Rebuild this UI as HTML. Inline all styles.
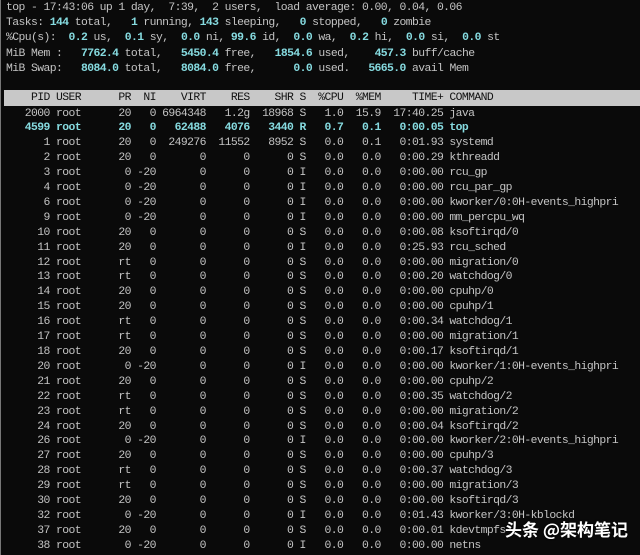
<!DOCTYPE html>
<html><head><meta charset="utf-8"><style>
html,body{margin:0;padding:0;background:#0a0a0a;}
body{width:640px;height:555px;overflow:hidden;position:relative;border-left:1px solid #777;box-sizing:border-box;}
.t{position:absolute;left:5px;font-family:"Liberation Mono",monospace;font-size:11.4px;letter-spacing:-0.59px;color:#c4c4c4;white-space:pre;}
#h{top:1px;line-height:15.2px;}
#p{top:106.5px;line-height:14.9px;}
.c{color:#86dbe0;font-weight:bold;}
#bar{position:absolute;left:3px;right:0;top:90px;height:16px;background:#c8c8c8;}
#bt{position:absolute;left:5px;top:90px;line-height:16px;font-family:"Liberation Mono",monospace;font-size:11.4px;letter-spacing:-0.59px;color:#111;white-space:pre;}
#wm{position:absolute;left:504px;top:516px;font-family:"Noto Sans CJK SC",sans-serif;font-size:17px;color:#fff;font-weight:bold;text-shadow:0 0 2px #000;}
</style></head><body>
<div class="t" id="h">top - 17:43:06 up 1 day,  7:39,  2 users,  load average: 0.00, 0.04, 0.06
Tasks: <span class="c">144</span> total,   <span class="c">1</span> running, <span class="c">143</span> sleeping,   <span class="c">0</span> stopped,   <span class="c">0</span> zombie
%Cpu(s):  <span class="c">0.2</span> us,  <span class="c">0.1</span> sy,  <span class="c">0.0</span> ni, <span class="c">99.6</span> id,  <span class="c">0.0</span> wa,  <span class="c">0.2</span> hi,  <span class="c">0.0</span> si,  <span class="c">0.0</span> st
MiB Mem :   <span class="c">7762.4</span> total,   <span class="c">5450.4</span> free,   <span class="c">1854.6</span> used,    <span class="c">457.3</span> buff/cache
MiB Swap:   <span class="c">8084.0</span> total,   <span class="c">8084.0</span> free,      <span class="c">0.0</span> used.   <span class="c">5665.0</span> avail Mem</div>
<div id="bar"></div>
<div id="bt">    PID USER      PR  NI    VIRT    RES    SHR S  %CPU  %MEM     TIME+ COMMAND</div>
<div class="t" id="p">   2000 root      20   0 6964348   1.2g  18968 S   1.0  15.9  17:40.25 java
<span class="c">   4599 root      20   0   62488   4076   3440 R   0.7   0.1   0:00.05 top</span>
      1 root      20   0  249276  11552   8952 S   0.0   0.1   0:01.93 systemd
      2 root      20   0       0      0      0 S   0.0   0.0   0:00.29 kthreadd
      3 root       0 -20       0      0      0 I   0.0   0.0   0:00.00 rcu_gp
      4 root       0 -20       0      0      0 I   0.0   0.0   0:00.00 rcu_par_gp
      6 root       0 -20       0      0      0 I   0.0   0.0   0:00.00 kworker/0:0H-events_highpri
      9 root       0 -20       0      0      0 I   0.0   0.0   0:00.00 mm_percpu_wq
     10 root      20   0       0      0      0 S   0.0   0.0   0:00.08 ksoftirqd/0
     11 root      20   0       0      0      0 I   0.0   0.0   0:25.93 rcu_sched
     12 root      rt   0       0      0      0 S   0.0   0.0   0:00.00 migration/0
     13 root      rt   0       0      0      0 S   0.0   0.0   0:00.20 watchdog/0
     14 root      20   0       0      0      0 S   0.0   0.0   0:00.00 cpuhp/0
     15 root      20   0       0      0      0 S   0.0   0.0   0:00.00 cpuhp/1
     16 root      rt   0       0      0      0 S   0.0   0.0   0:00.34 watchdog/1
     17 root      rt   0       0      0      0 S   0.0   0.0   0:00.00 migration/1
     18 root      20   0       0      0      0 S   0.0   0.0   0:00.17 ksoftirqd/1
     20 root       0 -20       0      0      0 I   0.0   0.0   0:00.00 kworker/1:0H-events_highpri
     21 root      20   0       0      0      0 S   0.0   0.0   0:00.00 cpuhp/2
     22 root      rt   0       0      0      0 S   0.0   0.0   0:00.35 watchdog/2
     23 root      rt   0       0      0      0 S   0.0   0.0   0:00.00 migration/2
     24 root      20   0       0      0      0 S   0.0   0.0   0:00.04 ksoftirqd/2
     26 root       0 -20       0      0      0 I   0.0   0.0   0:00.00 kworker/2:0H-events_highpri
     27 root      20   0       0      0      0 S   0.0   0.0   0:00.00 cpuhp/3
     28 root      rt   0       0      0      0 S   0.0   0.0   0:00.37 watchdog/3
     29 root      rt   0       0      0      0 S   0.0   0.0   0:00.00 migration/3
     30 root      20   0       0      0      0 S   0.0   0.0   0:00.00 ksoftirqd/3
     32 root       0 -20       0      0      0 I   0.0   0.0   0:01.43 kworker/3:0H-kblockd
     37 root      20   0       0      0      0 S   0.0   0.0   0:00.01 kdevtmpfs
     38 root       0 -20       0      0      0 I   0.0   0.0   0:00.00 netns</div>
<div id="wm">头条 @架构笔记</div>
</body></html>
